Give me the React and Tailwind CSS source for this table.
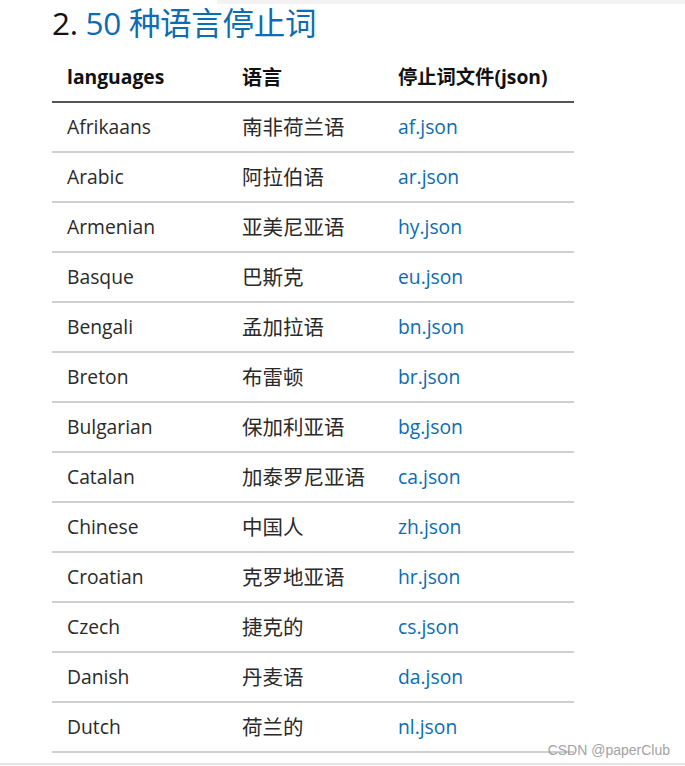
import React from "react";

const rows = [
  ["Afrikaans", "南非荷兰语", "af.json"],
  ["Arabic", "阿拉伯语", "ar.json"],
  ["Armenian", "亚美尼亚语", "hy.json"],
  ["Basque", "巴斯克", "eu.json"],
  ["Bengali", "孟加拉语", "bn.json"],
  ["Breton", "布雷顿", "br.json"],
  ["Bulgarian", "保加利亚语", "bg.json"],
  ["Catalan", "加泰罗尼亚语", "ca.json"],
  ["Chinese", "中国人", "zh.json"],
  ["Croatian", "克罗地亚语", "hr.json"],
  ["Czech", "捷克的", "cs.json"],
  ["Danish", "丹麦语", "da.json"],
  ["Dutch", "荷兰的", "nl.json"],
];

const font = { fontFamily: '"Open Sans", "Noto Sans CJK SC", sans-serif' };

export default function App() {
  return (
    <div
      className="relative w-[685px] h-[766px] bg-white overflow-hidden text-[#2a2a2a]"
      style={font}
    >
      {/* top strip */}
      <div className="ml-[217px] h-[4px] bg-[#f3f3f3]" />

      <h2 className="pl-[52px] mt-[1px] text-[31.5px] leading-[36px] font-normal tracking-[-0.3px]">
        <span className="text-[#111]">2. </span>
        <a className="text-[#0b6cb3]">50 种语言停止词</a>
      </h2>

      <table className="ml-[52px] mt-[13px] w-[522px] border-collapse text-[19.3px]">
        <thead>
          <tr className="border-b-[2px] border-[#555]">
            <th className="w-[175px] h-[48px] pl-[15px] text-left font-bold text-[#111]">
              languages
            </th>
            <th className="w-[156px] pl-[15px] text-left font-bold text-[#111] text-[20px]">
              语言
            </th>
            <th className="pl-[15px] text-left font-bold text-[#111]">
              停止词文件(json)
            </th>
          </tr>
        </thead>
        <tbody>
          {rows.map(([en, zh, file]) => (
            <tr key={file} className="border-b-[2px] border-[#d0d0d0]">
              <td className="h-[50px] pl-[15px] pt-[1px]">{en}</td>
              <td className="pl-[15px] pt-[1px] text-[20.5px]">{zh}</td>
              <td className="pl-[15px] pt-[1px] text-[#0b6cb3]">{file}</td>
            </tr>
          ))}
        </tbody>
      </table>

      <div className="mt-[10px] h-[2px] bg-[#e2e2e2]" />

      <div
        className="absolute right-[15px] top-[740px] text-[14px] text-[#999] opacity-90"
        style={{ fontFamily: '"Liberation Sans", Arial, sans-serif' }}
      >
        CSDN @paperClub
      </div>
    </div>
  );
}
